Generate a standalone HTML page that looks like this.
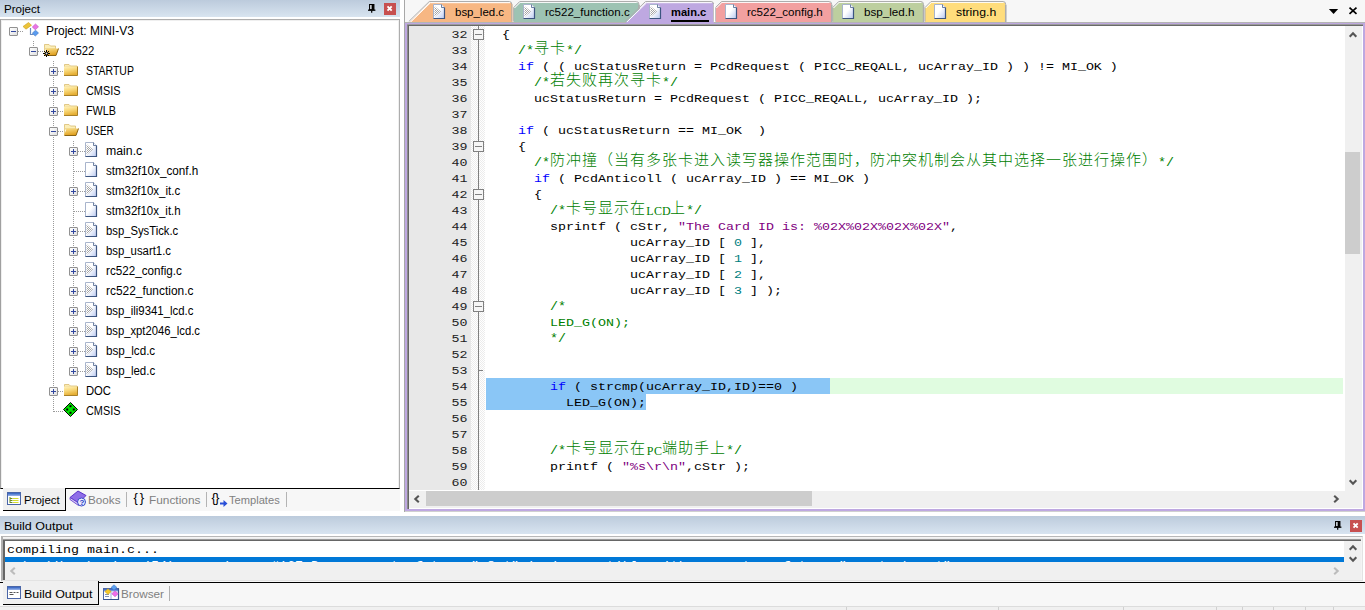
<!DOCTYPE html><html><head><meta charset="utf-8"><title>uVision</title><style>
*{box-sizing:border-box;margin:0;padding:0}
html,body{width:1365px;height:610px;overflow:hidden;background:#fff}
body{position:relative;font-family:"Liberation Sans","Noto Sans CJK SC",sans-serif;font-size:12px;color:#000}
.abs{position:absolute}
.ttl{position:absolute;height:17px;background:linear-gradient(#bccbdc,#d8e4f0);font-size:11.2px;line-height:18.5px;padding-left:3.8px;white-space:nowrap}
.closeb{position:absolute;width:12px;height:12px;background:#c75050}
.tree{position:absolute;left:0;top:19px;width:400px;height:470px;background:#fff;border:1px solid #adadad;border-left-color:#a0a0a0;border-bottom:1px solid #000;box-shadow:inset 1px 1px 0 #efefef,inset -1px 0 0 #efefef}
.trow{position:absolute;height:20px;line-height:20px;font-size:12px;white-space:nowrap}
.pm{position:absolute;width:9px;height:9px;border:1px solid #919191;background:linear-gradient(135deg,#fff,#e0e0e0);border-radius:1px}
.pm:before{content:"";position:absolute;left:1px;top:3px;width:5px;height:1px;background:#31479f}
.pm.plus:after{content:"";position:absolute;left:3px;top:1px;width:1px;height:5px;background:#31479f}
.btab{position:absolute;font-size:11.5px;line-height:20px;white-space:nowrap;color:#808080}
.btab.sel{color:#000}
.code,.cm{position:absolute;height:16px;line-height:16px;font-family:"Liberation Mono",monospace;font-size:13.333px;white-space:pre;color:#000;transform-origin:0 11.600px;transform:scaleY(.85)}
.cm{transform:none}
.code.ns{transform:scaleY(.95)}
.ln{position:absolute;left:409px;width:58.500px;text-align:right;height:16px;line-height:16px;font-family:"Liberation Mono",monospace;font-size:13.333px;color:#222;transform-origin:0 11.600px;transform:scaleY(.85)}
.code.k{color:#0000ff}.c,.code.c{color:#008000}.code.s{color:#800080}.code.n{color:#008080}
.cz{position:absolute;height:16px;line-height:16px;font-family:"Liberation Mono","Noto Sans CJK SC",monospace;font-size:15px;font-weight:300;letter-spacing:1px;white-space:pre;margin-top:-1.2px}
.sm{font-family:"Liberation Serif",serif;font-size:12px;display:inline-block;width:8px;text-align:center;vertical-align:baseline}
.fold{position:absolute;left:473px;width:11px;height:11px;border:1px solid #808080;background:#f6f6f6}
.fold:before{content:"";position:absolute;left:1px;top:4px;width:7px;height:1px;background:#808080}
.etab{position:absolute;top:2.1px;height:21px;font-size:11.3px;line-height:20px;white-space:nowrap}
</style></head><body>
<svg width="0" height="0" style="position:absolute"><defs><linearGradient id="tb" x1="0" y1="0" x2="0" y2="1"><stop offset="0" stop-color="#2f5fc0"/><stop offset="1" stop-color="#9db8ec"/></linearGradient></defs></svg>
<div class="ttl" style="left:0;top:0;width:400px"><span style="display:inline-block;transform-origin:0 50%;transform:scaleX(1.0365);">Project</span></div>
<div class="abs" style="left:368px;top:3.900px"><svg width="8" height="9" viewBox="0 0 8 9" style="display:block"><rect x="1.600" y="0.500" width="4.300" height="5.200" fill="#e8eef4" stroke="#000" stroke-width="1.100"/><rect x="3.600" y="0.500" width="2.300" height="5.200" fill="#000"/><path d="M0 6.200h7.400" stroke="#000" stroke-width="1.300"/><path d="M3.700 6.500v2.300" stroke="#000" stroke-width="1.200"/></svg></div>
<div class="closeb" style="left:384px;top:3px"><svg width="12" height="12" viewBox="0 0 12 12" style="display:block"><path d="M3.500 3.400L7.700 7.600M7.700 3.400L3.500 7.600" stroke="#fff" stroke-width="1.900"/></svg></div>
<div class="tree"></div>
<div class="abs" style="left:33px;top:41px;width:1px;height:6px;background-image:linear-gradient(#9a9a9a 50%,transparent 50%);background-size:1px 2px"></div>
<div class="abs" style="left:53px;top:61px;width:1px;height:351px;background-image:linear-gradient(#9a9a9a 50%,transparent 50%);background-size:1px 2px"></div>
<div class="abs" style="left:73px;top:141px;width:1px;height:231px;background-image:linear-gradient(#9a9a9a 50%,transparent 50%);background-size:1px 2px"></div>
<div class="abs" style="left:14px;top:31px;width:10px;height:1px;background-image:linear-gradient(90deg,#9a9a9a 50%,transparent 50%);background-size:2px 1px"></div>
<div class="pm" style="left:9px;top:27px"></div>
<div class="abs" style="left:22px;top:22px;height:16px"><svg width="18" height="16" viewBox="0 0 18 16"><path d="M8.500 6v6.500h3" fill="none" stroke="#6b8cc0" stroke-width="1.200"/><path d="M1 4.500l5.500-4 3 2.700-5.500 4z" fill="#ecc338" stroke="#c9a020" stroke-width=".6"/><path d="M13.500 2l3 2.800-3.200 3-3-2.800z" fill="#ea74e6" stroke="#c050bc" stroke-width=".6"/><path d="M13.500 8.200l3 2.800-3.200 3-3-2.800z" fill="#5a9cf0" stroke="#3a70c0" stroke-width=".6"/></svg></div>
<div class="trow" style="left:45.8px;top:20.9px;transform-origin:0 50%;transform:scaleX(0.9974);">Project: MINI-V3</div>
<div class="abs" style="left:34px;top:51px;width:10px;height:1px;background-image:linear-gradient(90deg,#9a9a9a 50%,transparent 50%);background-size:2px 1px"></div>
<div class="pm" style="left:29px;top:47px"></div>
<div class="abs" style="left:43px;top:42px;height:16px"><svg width="16" height="16" viewBox="0 0 16 16"><path d="M1.500 2.500h4.500l1.500 1.500h5v3h-11z" fill="#fbeeb8" stroke="#d9bd72" stroke-width=".8"/><path d="M1.500 5v8" stroke="#e8d08a" stroke-width="1"/><path d="M1 13.500l2.500-7h12l-2.500 7z" fill="url(#fo)"/><path d="M1.500 13.500h11.500l2.500-7" fill="none" stroke="#8a6414" stroke-width="1"/></svg></div>
<div class="trow" style="left:66.3px;top:40.9px;transform-origin:0 50%;transform:scaleX(0.9424);">rc522</div>
<div class="abs" style="left:54px;top:71px;width:10px;height:1px;background-image:linear-gradient(90deg,#9a9a9a 50%,transparent 50%);background-size:2px 1px"></div>
<div class="pm plus" style="left:49px;top:67px"></div>
<div class="abs" style="left:63px;top:62px;height:16px"><svg width="16" height="16" viewBox="0 0 16 16"><defs><linearGradient id="fg" x1="0" y1="0" x2="0.300" y2="1"><stop offset="0" stop-color="#fff3c0"/><stop offset=".45" stop-color="#f9da7e"/><stop offset="1" stop-color="#e5ae34"/></linearGradient><linearGradient id="fo" x1="0" y1="0" x2="0.300" y2="1"><stop offset="0" stop-color="#fbe08a"/><stop offset="1" stop-color="#e0a020"/></linearGradient></defs><path d="M1.500 2.500h4.500l1.500 1.500h6.500v1h-12.500z" fill="#fbeab0" stroke="#d9bd72" stroke-width=".8"/><path d="M1 4.500h13.500v9h-13.500z" fill="url(#fg)"/><path d="M1 13.500h13.500v-9" fill="none" stroke="#a88028" stroke-width="1"/></svg></div>
<div class="trow" style="left:86.1px;top:60.9px;transform-origin:0 50%;transform:scaleX(0.8724);">STARTUP</div>
<div class="abs" style="left:54px;top:91px;width:10px;height:1px;background-image:linear-gradient(90deg,#9a9a9a 50%,transparent 50%);background-size:2px 1px"></div>
<div class="pm plus" style="left:49px;top:87px"></div>
<div class="abs" style="left:63px;top:82px;height:16px"><svg width="16" height="16" viewBox="0 0 16 16"><defs><linearGradient id="fg" x1="0" y1="0" x2="0.300" y2="1"><stop offset="0" stop-color="#fff3c0"/><stop offset=".45" stop-color="#f9da7e"/><stop offset="1" stop-color="#e5ae34"/></linearGradient><linearGradient id="fo" x1="0" y1="0" x2="0.300" y2="1"><stop offset="0" stop-color="#fbe08a"/><stop offset="1" stop-color="#e0a020"/></linearGradient></defs><path d="M1.500 2.500h4.500l1.500 1.500h6.500v1h-12.500z" fill="#fbeab0" stroke="#d9bd72" stroke-width=".8"/><path d="M1 4.500h13.500v9h-13.500z" fill="url(#fg)"/><path d="M1 13.500h13.500v-9" fill="none" stroke="#a88028" stroke-width="1"/></svg></div>
<div class="trow" style="left:86.1px;top:80.9px;transform-origin:0 50%;transform:scaleX(0.9075);">CMSIS</div>
<div class="abs" style="left:54px;top:111px;width:10px;height:1px;background-image:linear-gradient(90deg,#9a9a9a 50%,transparent 50%);background-size:2px 1px"></div>
<div class="pm plus" style="left:49px;top:107px"></div>
<div class="abs" style="left:63px;top:102px;height:16px"><svg width="16" height="16" viewBox="0 0 16 16"><defs><linearGradient id="fg" x1="0" y1="0" x2="0.300" y2="1"><stop offset="0" stop-color="#fff3c0"/><stop offset=".45" stop-color="#f9da7e"/><stop offset="1" stop-color="#e5ae34"/></linearGradient><linearGradient id="fo" x1="0" y1="0" x2="0.300" y2="1"><stop offset="0" stop-color="#fbe08a"/><stop offset="1" stop-color="#e0a020"/></linearGradient></defs><path d="M1.500 2.500h4.500l1.500 1.500h6.500v1h-12.500z" fill="#fbeab0" stroke="#d9bd72" stroke-width=".8"/><path d="M1 4.500h13.500v9h-13.500z" fill="url(#fg)"/><path d="M1 13.500h13.500v-9" fill="none" stroke="#a88028" stroke-width="1"/></svg></div>
<div class="trow" style="left:86.1px;top:100.9px;transform-origin:0 50%;transform:scaleX(0.8997);">FWLB</div>
<div class="abs" style="left:54px;top:131px;width:10px;height:1px;background-image:linear-gradient(90deg,#9a9a9a 50%,transparent 50%);background-size:2px 1px"></div>
<div class="pm" style="left:49px;top:127px"></div>
<div class="abs" style="left:63px;top:122px;height:16px"><svg width="16" height="16" viewBox="0 0 16 16"><path d="M1.500 2.500h4.500l1.500 1.500h5v3h-11z" fill="#fbeeb8" stroke="#d9bd72" stroke-width=".8"/><path d="M1.500 5v8" stroke="#e8d08a" stroke-width="1"/><path d="M1 13.500l2.500-7h12l-2.500 7z" fill="url(#fo)"/><path d="M1.500 13.500h11.500l2.500-7" fill="none" stroke="#8a6414" stroke-width="1"/></svg></div>
<div class="trow" style="left:86.1px;top:120.9px;transform-origin:0 50%;transform:scaleX(0.8307);">USER</div>
<div class="abs" style="left:74px;top:151px;width:12px;height:1px;background-image:linear-gradient(90deg,#9a9a9a 50%,transparent 50%);background-size:2px 1px"></div>
<div class="pm plus" style="left:69px;top:147px"></div>
<div class="abs" style="left:85px;top:142px;height:16px"><svg width="13" height="16" viewBox="0 0 13 16"><defs><pattern id="dp" width="2" height="2" patternUnits="userSpaceOnUse"><rect width="1" height="1" fill="#a4a4a4"/><rect x="1" y="1" width="1" height="1" fill="#a4a4a4"/></pattern><linearGradient id="pg" x1="0" y1="0" x2="1" y2="1"><stop offset=".45" stop-color="#fff"/><stop offset="1" stop-color="#b8c8f0"/></linearGradient></defs><path d="M0.500 0.500h8l3 3v11h-11z" fill="url(#pg)" stroke="#a8b4cc"/><path d="M11.500 3.500v11h-11" fill="none" stroke="#3c5580" stroke-width="1.200"/><path d="M8.500 0.500v3h3" fill="#f4f6fd" stroke="#4a628c" stroke-width=".8"/><polygon points="1.500,2 1.500,13 8,7.500" fill="url(#dp)"/></svg></div>
<div class="trow" style="left:106.1px;top:140.9px;transform-origin:0 50%;transform:scaleX(1.0242);">main.c</div>
<div class="abs" style="left:74px;top:171px;width:12px;height:1px;background-image:linear-gradient(90deg,#9a9a9a 50%,transparent 50%);background-size:2px 1px"></div>
<div class="abs" style="left:85px;top:162px;height:16px"><svg width="13" height="16" viewBox="0 0 13 16"><path d="M0.500 0.500h8l3 3v11h-11z" fill="url(#pg)" stroke="#a8b4cc"/><path d="M11.500 3.500v11h-11" fill="none" stroke="#3c5580" stroke-width="1.200"/><path d="M8.500 0.500v3h3" fill="#f4f6fd" stroke="#4a628c" stroke-width=".8"/></svg></div>
<div class="trow" style="left:106.1px;top:160.9px;transform-origin:0 50%;transform:scaleX(0.9743);">stm32f10x_conf.h</div>
<div class="abs" style="left:74px;top:191px;width:12px;height:1px;background-image:linear-gradient(90deg,#9a9a9a 50%,transparent 50%);background-size:2px 1px"></div>
<div class="pm plus" style="left:69px;top:187px"></div>
<div class="abs" style="left:85px;top:182px;height:16px"><svg width="13" height="16" viewBox="0 0 13 16"><defs><pattern id="dp" width="2" height="2" patternUnits="userSpaceOnUse"><rect width="1" height="1" fill="#a4a4a4"/><rect x="1" y="1" width="1" height="1" fill="#a4a4a4"/></pattern><linearGradient id="pg" x1="0" y1="0" x2="1" y2="1"><stop offset=".45" stop-color="#fff"/><stop offset="1" stop-color="#b8c8f0"/></linearGradient></defs><path d="M0.500 0.500h8l3 3v11h-11z" fill="url(#pg)" stroke="#a8b4cc"/><path d="M11.500 3.500v11h-11" fill="none" stroke="#3c5580" stroke-width="1.200"/><path d="M8.500 0.500v3h3" fill="#f4f6fd" stroke="#4a628c" stroke-width=".8"/><polygon points="1.500,2 1.500,13 8,7.500" fill="url(#dp)"/></svg></div>
<div class="trow" style="left:106.1px;top:180.9px;transform-origin:0 50%;transform:scaleX(0.959);">stm32f10x_it.c</div>
<div class="abs" style="left:74px;top:211px;width:12px;height:1px;background-image:linear-gradient(90deg,#9a9a9a 50%,transparent 50%);background-size:2px 1px"></div>
<div class="abs" style="left:85px;top:202px;height:16px"><svg width="13" height="16" viewBox="0 0 13 16"><path d="M0.500 0.500h8l3 3v11h-11z" fill="url(#pg)" stroke="#a8b4cc"/><path d="M11.500 3.500v11h-11" fill="none" stroke="#3c5580" stroke-width="1.200"/><path d="M8.500 0.500v3h3" fill="#f4f6fd" stroke="#4a628c" stroke-width=".8"/></svg></div>
<div class="trow" style="left:106.1px;top:200.9px;transform-origin:0 50%;transform:scaleX(0.9571);">stm32f10x_it.h</div>
<div class="abs" style="left:74px;top:231px;width:12px;height:1px;background-image:linear-gradient(90deg,#9a9a9a 50%,transparent 50%);background-size:2px 1px"></div>
<div class="pm plus" style="left:69px;top:227px"></div>
<div class="abs" style="left:85px;top:222px;height:16px"><svg width="13" height="16" viewBox="0 0 13 16"><defs><pattern id="dp" width="2" height="2" patternUnits="userSpaceOnUse"><rect width="1" height="1" fill="#a4a4a4"/><rect x="1" y="1" width="1" height="1" fill="#a4a4a4"/></pattern><linearGradient id="pg" x1="0" y1="0" x2="1" y2="1"><stop offset=".45" stop-color="#fff"/><stop offset="1" stop-color="#b8c8f0"/></linearGradient></defs><path d="M0.500 0.500h8l3 3v11h-11z" fill="url(#pg)" stroke="#a8b4cc"/><path d="M11.500 3.500v11h-11" fill="none" stroke="#3c5580" stroke-width="1.200"/><path d="M8.500 0.500v3h3" fill="#f4f6fd" stroke="#4a628c" stroke-width=".8"/><polygon points="1.500,2 1.500,13 8,7.500" fill="url(#dp)"/></svg></div>
<div class="trow" style="left:106.1px;top:220.9px;transform-origin:0 50%;transform:scaleX(0.9386);">bsp_SysTick.c</div>
<div class="abs" style="left:74px;top:251px;width:12px;height:1px;background-image:linear-gradient(90deg,#9a9a9a 50%,transparent 50%);background-size:2px 1px"></div>
<div class="pm plus" style="left:69px;top:247px"></div>
<div class="abs" style="left:85px;top:242px;height:16px"><svg width="13" height="16" viewBox="0 0 13 16"><defs><pattern id="dp" width="2" height="2" patternUnits="userSpaceOnUse"><rect width="1" height="1" fill="#a4a4a4"/><rect x="1" y="1" width="1" height="1" fill="#a4a4a4"/></pattern><linearGradient id="pg" x1="0" y1="0" x2="1" y2="1"><stop offset=".45" stop-color="#fff"/><stop offset="1" stop-color="#b8c8f0"/></linearGradient></defs><path d="M0.500 0.500h8l3 3v11h-11z" fill="url(#pg)" stroke="#a8b4cc"/><path d="M11.500 3.500v11h-11" fill="none" stroke="#3c5580" stroke-width="1.200"/><path d="M8.500 0.500v3h3" fill="#f4f6fd" stroke="#4a628c" stroke-width=".8"/><polygon points="1.500,2 1.500,13 8,7.500" fill="url(#dp)"/></svg></div>
<div class="trow" style="left:106.1px;top:240.9px;transform-origin:0 50%;transform:scaleX(0.9459);">bsp_usart1.c</div>
<div class="abs" style="left:74px;top:271px;width:12px;height:1px;background-image:linear-gradient(90deg,#9a9a9a 50%,transparent 50%);background-size:2px 1px"></div>
<div class="pm plus" style="left:69px;top:267px"></div>
<div class="abs" style="left:85px;top:262px;height:16px"><svg width="13" height="16" viewBox="0 0 13 16"><defs><pattern id="dp" width="2" height="2" patternUnits="userSpaceOnUse"><rect width="1" height="1" fill="#a4a4a4"/><rect x="1" y="1" width="1" height="1" fill="#a4a4a4"/></pattern><linearGradient id="pg" x1="0" y1="0" x2="1" y2="1"><stop offset=".45" stop-color="#fff"/><stop offset="1" stop-color="#b8c8f0"/></linearGradient></defs><path d="M0.500 0.500h8l3 3v11h-11z" fill="url(#pg)" stroke="#a8b4cc"/><path d="M11.500 3.500v11h-11" fill="none" stroke="#3c5580" stroke-width="1.200"/><path d="M8.500 0.500v3h3" fill="#f4f6fd" stroke="#4a628c" stroke-width=".8"/><polygon points="1.500,2 1.500,13 8,7.500" fill="url(#dp)"/></svg></div>
<div class="trow" style="left:106.1px;top:260.9px;transform-origin:0 50%;transform:scaleX(0.9712);">rc522_config.c</div>
<div class="abs" style="left:74px;top:291px;width:12px;height:1px;background-image:linear-gradient(90deg,#9a9a9a 50%,transparent 50%);background-size:2px 1px"></div>
<div class="pm plus" style="left:69px;top:287px"></div>
<div class="abs" style="left:85px;top:282px;height:16px"><svg width="13" height="16" viewBox="0 0 13 16"><defs><pattern id="dp" width="2" height="2" patternUnits="userSpaceOnUse"><rect width="1" height="1" fill="#a4a4a4"/><rect x="1" y="1" width="1" height="1" fill="#a4a4a4"/></pattern><linearGradient id="pg" x1="0" y1="0" x2="1" y2="1"><stop offset=".45" stop-color="#fff"/><stop offset="1" stop-color="#b8c8f0"/></linearGradient></defs><path d="M0.500 0.500h8l3 3v11h-11z" fill="url(#pg)" stroke="#a8b4cc"/><path d="M11.500 3.500v11h-11" fill="none" stroke="#3c5580" stroke-width="1.200"/><path d="M8.500 0.500v3h3" fill="#f4f6fd" stroke="#4a628c" stroke-width=".8"/><polygon points="1.500,2 1.500,13 8,7.500" fill="url(#dp)"/></svg></div>
<div class="trow" style="left:106.1px;top:280.9px;transform-origin:0 50%;transform:scaleX(0.9925);">rc522_function.c</div>
<div class="abs" style="left:74px;top:311px;width:12px;height:1px;background-image:linear-gradient(90deg,#9a9a9a 50%,transparent 50%);background-size:2px 1px"></div>
<div class="pm plus" style="left:69px;top:307px"></div>
<div class="abs" style="left:85px;top:302px;height:16px"><svg width="13" height="16" viewBox="0 0 13 16"><defs><pattern id="dp" width="2" height="2" patternUnits="userSpaceOnUse"><rect width="1" height="1" fill="#a4a4a4"/><rect x="1" y="1" width="1" height="1" fill="#a4a4a4"/></pattern><linearGradient id="pg" x1="0" y1="0" x2="1" y2="1"><stop offset=".45" stop-color="#fff"/><stop offset="1" stop-color="#b8c8f0"/></linearGradient></defs><path d="M0.500 0.500h8l3 3v11h-11z" fill="url(#pg)" stroke="#a8b4cc"/><path d="M11.500 3.500v11h-11" fill="none" stroke="#3c5580" stroke-width="1.200"/><path d="M8.500 0.500v3h3" fill="#f4f6fd" stroke="#4a628c" stroke-width=".8"/><polygon points="1.500,2 1.500,13 8,7.500" fill="url(#dp)"/></svg></div>
<div class="trow" style="left:106.1px;top:300.9px;transform-origin:0 50%;transform:scaleX(0.9494);">bsp_ili9341_lcd.c</div>
<div class="abs" style="left:74px;top:331px;width:12px;height:1px;background-image:linear-gradient(90deg,#9a9a9a 50%,transparent 50%);background-size:2px 1px"></div>
<div class="pm plus" style="left:69px;top:327px"></div>
<div class="abs" style="left:85px;top:322px;height:16px"><svg width="13" height="16" viewBox="0 0 13 16"><defs><pattern id="dp" width="2" height="2" patternUnits="userSpaceOnUse"><rect width="1" height="1" fill="#a4a4a4"/><rect x="1" y="1" width="1" height="1" fill="#a4a4a4"/></pattern><linearGradient id="pg" x1="0" y1="0" x2="1" y2="1"><stop offset=".45" stop-color="#fff"/><stop offset="1" stop-color="#b8c8f0"/></linearGradient></defs><path d="M0.500 0.500h8l3 3v11h-11z" fill="url(#pg)" stroke="#a8b4cc"/><path d="M11.500 3.500v11h-11" fill="none" stroke="#3c5580" stroke-width="1.200"/><path d="M8.500 0.500v3h3" fill="#f4f6fd" stroke="#4a628c" stroke-width=".8"/><polygon points="1.500,2 1.500,13 8,7.500" fill="url(#dp)"/></svg></div>
<div class="trow" style="left:106.1px;top:320.9px;transform-origin:0 50%;transform:scaleX(0.9383);">bsp_xpt2046_lcd.c</div>
<div class="abs" style="left:74px;top:351px;width:12px;height:1px;background-image:linear-gradient(90deg,#9a9a9a 50%,transparent 50%);background-size:2px 1px"></div>
<div class="pm plus" style="left:69px;top:347px"></div>
<div class="abs" style="left:85px;top:342px;height:16px"><svg width="13" height="16" viewBox="0 0 13 16"><defs><pattern id="dp" width="2" height="2" patternUnits="userSpaceOnUse"><rect width="1" height="1" fill="#a4a4a4"/><rect x="1" y="1" width="1" height="1" fill="#a4a4a4"/></pattern><linearGradient id="pg" x1="0" y1="0" x2="1" y2="1"><stop offset=".45" stop-color="#fff"/><stop offset="1" stop-color="#b8c8f0"/></linearGradient></defs><path d="M0.500 0.500h8l3 3v11h-11z" fill="url(#pg)" stroke="#a8b4cc"/><path d="M11.500 3.500v11h-11" fill="none" stroke="#3c5580" stroke-width="1.200"/><path d="M8.500 0.500v3h3" fill="#f4f6fd" stroke="#4a628c" stroke-width=".8"/><polygon points="1.500,2 1.500,13 8,7.500" fill="url(#dp)"/></svg></div>
<div class="trow" style="left:106.1px;top:340.9px;transform-origin:0 50%;transform:scaleX(0.9704);">bsp_lcd.c</div>
<div class="abs" style="left:74px;top:371px;width:12px;height:1px;background-image:linear-gradient(90deg,#9a9a9a 50%,transparent 50%);background-size:2px 1px"></div>
<div class="pm plus" style="left:69px;top:367px"></div>
<div class="abs" style="left:85px;top:362px;height:16px"><svg width="13" height="16" viewBox="0 0 13 16"><defs><pattern id="dp" width="2" height="2" patternUnits="userSpaceOnUse"><rect width="1" height="1" fill="#a4a4a4"/><rect x="1" y="1" width="1" height="1" fill="#a4a4a4"/></pattern><linearGradient id="pg" x1="0" y1="0" x2="1" y2="1"><stop offset=".45" stop-color="#fff"/><stop offset="1" stop-color="#b8c8f0"/></linearGradient></defs><path d="M0.500 0.500h8l3 3v11h-11z" fill="url(#pg)" stroke="#a8b4cc"/><path d="M11.500 3.500v11h-11" fill="none" stroke="#3c5580" stroke-width="1.200"/><path d="M8.500 0.500v3h3" fill="#f4f6fd" stroke="#4a628c" stroke-width=".8"/><polygon points="1.500,2 1.500,13 8,7.500" fill="url(#dp)"/></svg></div>
<div class="trow" style="left:106.1px;top:360.9px;transform-origin:0 50%;transform:scaleX(0.9577);">bsp_led.c</div>
<div class="abs" style="left:54px;top:391px;width:10px;height:1px;background-image:linear-gradient(90deg,#9a9a9a 50%,transparent 50%);background-size:2px 1px"></div>
<div class="pm plus" style="left:49px;top:387px"></div>
<div class="abs" style="left:63px;top:382px;height:16px"><svg width="16" height="16" viewBox="0 0 16 16"><defs><linearGradient id="fg" x1="0" y1="0" x2="0.300" y2="1"><stop offset="0" stop-color="#fff3c0"/><stop offset=".45" stop-color="#f9da7e"/><stop offset="1" stop-color="#e5ae34"/></linearGradient><linearGradient id="fo" x1="0" y1="0" x2="0.300" y2="1"><stop offset="0" stop-color="#fbe08a"/><stop offset="1" stop-color="#e0a020"/></linearGradient></defs><path d="M1.500 2.500h4.500l1.500 1.500h6.500v1h-12.500z" fill="#fbeab0" stroke="#d9bd72" stroke-width=".8"/><path d="M1 4.500h13.500v9h-13.500z" fill="url(#fg)"/><path d="M1 13.500h13.500v-9" fill="none" stroke="#a88028" stroke-width="1"/></svg></div>
<div class="trow" style="left:86.3px;top:380.9px;transform-origin:0 50%;transform:scaleX(0.9373);">DOC</div>
<div class="abs" style="left:54px;top:411px;width:10px;height:1px;background-image:linear-gradient(90deg,#9a9a9a 50%,transparent 50%);background-size:2px 1px"></div>
<div class="abs" style="left:63px;top:402px;height:16px"><svg width="16" height="16" viewBox="0 0 16 16"><path d="M7.500 0.500l7 7-7 7-7-7z" fill="#00e000" stroke="#000" stroke-width="1"/><g fill="#000"><rect x="6.500" y="3.200" width="2" height="2"/><rect x="3.200" y="6.500" width="2" height="2"/><rect x="9.800" y="6.500" width="2" height="2"/><rect x="6.500" y="9.800" width="2" height="2"/></g></svg></div>
<div class="trow" style="left:86.1px;top:400.9px;transform-origin:0 50%;transform:scaleX(0.9075);">CMSIS</div>
<svg class="abs" style="left:43px;top:50px" width="7" height="7" viewBox="0 0 7 7"><path d="M3.500 0v7M0 3.500h7M1 1l5 5M6 1l-5 5" stroke="#000" stroke-width="1"/><circle cx="3.500" cy="3.500" r="1" fill="#ddd"/></svg>
<div class="abs" style="left:0;top:489px;width:400px;height:27px;background:#fff"></div>
<div class="abs" style="left:3px;top:489px;width:397px;height:22px;background:#f7f7f7"></div>
<div class="abs" style="left:3px;top:488px;width:63px;height:23px;background:#f0f0f0;border:1px solid #000;border-top:none;border-left:none"></div>
<svg class="abs" style="left:7px;top:492px" width="14" height="13" viewBox="0 0 14 13"><rect x=".5" y=".5" width="13" height="12" fill="#fff" stroke="#4a66a8"/><rect x="1" y="1" width="12" height="3" fill="url(#tb)"/><path d="M3 5v6" stroke="#6a8a20" stroke-width="1"/><path d="M3 6.500h2.500M3 8.500h2.500M3 10.500h2.500" stroke="#6a8a20" stroke-width="1"/><path d="M6 6.500h5.500M6 8.500h5.500M6 10.500h5.500" stroke="#d4dc30" stroke-width="1.200"/></svg>
<div class="btab sel" style="left:24px;top:490px;transform-origin:0 50%;transform:scaleX(0.9973);">Project</div>
<svg class="abs" style="left:69px;top:490px" width="18" height="17" viewBox="0 0 18 17"><path d="M1 7.500l8-6.500 8 4.500-7.500 7.500z" fill="#8f6ee8" stroke="#5a32c8"/><path d="M1 7.500v2l8.500 6v-2.500z" fill="#d8ccf8" stroke="#5a32c8" stroke-width=".8"/><circle cx="12.500" cy="12" r="4" fill="#e8ecff" stroke="#3a4ac8"/><text x="10.500" y="15" font-size="8" font-weight="bold" fill="#2a3ac0" font-family="Liberation Sans,sans-serif">?</text></svg>
<div class="btab" style="left:88px;top:490px;transform-origin:0 50%;transform:scaleX(1.0166);">Books</div>
<div class="abs" style="left:126px;top:492px;width:1px;height:15px;background:#b4b4b4"></div>
<div class="btab sel" style="left:133.500px;top:487.500px;font-size:13px;letter-spacing:1.800px">{}</div>
<div class="btab" style="left:149px;top:490px;transform-origin:0 50%;transform:scaleX(1.0309);">Functions</div>
<div class="abs" style="left:206px;top:492px;width:1px;height:15px;background:#b4b4b4"></div>
<div class="btab sel" style="left:211.500px;top:487.500px;font-size:13px;letter-spacing:-0.800px">{}</div>
<svg class="abs" style="left:219.500px;top:500px" width="8" height="7" viewBox="0 0 8 7"><path d="M0 2.500h3.500v-2.500l4 3.500-4 3.500v-2.500h-3.500z" fill="#2a50d8"/></svg>
<div class="btab" style="left:228.500px;top:490px;transform-origin:0 50%;transform:scaleX(0.9672);">Templates</div>
<div class="abs" style="left:286px;top:492px;width:1px;height:15px;background:#b4b4b4"></div>
<div class="abs" style="left:400px;top:0;width:4px;height:516px;background:#fff"></div>
<div class="abs" style="left:404px;top:0;width:1px;height:512px;background:#a8a8a8"></div>
<div class="abs" style="left:405px;top:0;width:960px;height:23px;background:#f7f7f7"></div>
<svg class="abs" style="left:405px;top:0" width="960" height="23" viewBox="405 0 960 23">
<path d="M409.5 22.5 L430.0 2.5 H510 Q512.5 2.5 512.5 5.5 V22.5 Z" fill="#f7b783"/><path d="M409.5 22.5 L430.0 2.5 H510 Q512.5 2.5 512.5 5.5 V22.5" fill="none" stroke="#adadad" stroke-width="1" transform="translate(-0.7,-1)"/><path d="M410.2 22.5 L430.5 2.7 H510" fill="none" stroke="#fff" stroke-width="1"/>
<path d="M513.7 22.5 V8.5 L519.7 2.5 H636.5 Q639.0 2.5 639.0 5.5 V22.5 Z" fill="#9dc3b3"/><path d="M513.7 22.5 V8.5 L519.7 2.5 H636.5 Q639.0 2.5 639.0 5.5 V22.5" fill="none" stroke="#adadad" stroke-width="1" transform="translate(0,-1)"/><path d="M514.7 9 L520.2 3.5 H636.5" fill="none" stroke="#fff" stroke-opacity=".8" stroke-width="1" transform="translate(0,-1)"/><path d="M639.0 5 V22.5" stroke="#adadad" stroke-width="1.500"/>
<path d="M715.5 22.5 V8.5 L721.5 2.5 H829.2 Q831.7 2.5 831.7 5.5 V22.5 Z" fill="#f2a0a0"/><path d="M715.5 22.5 V8.5 L721.5 2.5 H829.2 Q831.7 2.5 831.7 5.5 V22.5" fill="none" stroke="#adadad" stroke-width="1" transform="translate(0,-1)"/><path d="M716.5 9 L722.0 3.5 H829.2" fill="none" stroke="#fff" stroke-opacity=".8" stroke-width="1" transform="translate(0,-1)"/><path d="M831.7 5 V22.5" stroke="#adadad" stroke-width="1.500"/>
<path d="M832.7 22.5 V8.5 L838.7 2.5 H921 Q923.5 2.5 923.5 5.5 V22.5 Z" fill="#bdcf9f"/><path d="M832.7 22.5 V8.5 L838.7 2.5 H921 Q923.5 2.5 923.5 5.5 V22.5" fill="none" stroke="#adadad" stroke-width="1" transform="translate(0,-1)"/><path d="M833.7 9 L839.2 3.5 H921" fill="none" stroke="#fff" stroke-opacity=".8" stroke-width="1" transform="translate(0,-1)"/><path d="M923.5 5 V22.5" stroke="#adadad" stroke-width="1.500"/>
<path d="M925 22.5 V8.5 L931 2.5 H1003.2 Q1005.7 2.5 1005.7 5.5 V22.5 Z" fill="#ffdd7c"/><path d="M925 22.5 V8.5 L931 2.5 H1003.2 Q1005.7 2.5 1005.7 5.5 V22.5" fill="none" stroke="#adadad" stroke-width="1" transform="translate(0,-1)"/><path d="M926 9 L931.5 3.5 H1003.2" fill="none" stroke="#fff" stroke-opacity=".8" stroke-width="1" transform="translate(0,-1)"/><path d="M1005.7 5 V22.5" stroke="#adadad" stroke-width="1.500"/>
<path d="M625.7 22.5 L646.2 2.5 H711.8 Q714.3 2.5 714.3 5.5 V22.5 Z" fill="#bea8e1"/><path d="M625.7 22.5 L646.2 2.5 H711.8 Q714.3 2.5 714.3 5.5 V22.5" fill="none" stroke="#adadad" stroke-width="1" transform="translate(-0.7,-1)"/><path d="M626.4000000000001 22.5 L646.7 2.7 H711.8" fill="none" stroke="#fff" stroke-width="1"/>
<path d="M714.500 4 V22.500" stroke="#fff" stroke-width="1.500"/>
<path d="M405 22.500 H1365" stroke="#b4b4b4" stroke-width="1"/>
<path d="M626 22.500 H714" stroke="#bea8e1" stroke-width="1"/>
</svg>
<div class="abs" style="left:433px;top:4px;height:16px"><svg width="13" height="16" viewBox="0 0 13 16"><defs><pattern id="dp" width="2" height="2" patternUnits="userSpaceOnUse"><rect width="1" height="1" fill="#a4a4a4"/><rect x="1" y="1" width="1" height="1" fill="#a4a4a4"/></pattern><linearGradient id="pg" x1="0" y1="0" x2="1" y2="1"><stop offset=".45" stop-color="#fff"/><stop offset="1" stop-color="#b8c8f0"/></linearGradient></defs><path d="M0.500 0.500h8l3 3v11h-11z" fill="url(#pg)" stroke="#a8b4cc"/><path d="M11.500 3.500v11h-11" fill="none" stroke="#3c5580" stroke-width="1.200"/><path d="M8.500 0.500v3h3" fill="#f4f6fd" stroke="#4a628c" stroke-width=".8"/><polygon points="1.500,2 1.500,13 8,7.500" fill="url(#dp)"/></svg></div>
<div class="etab" style="left:454.8px;transform-origin:0 50%;transform:scaleX(1.0153);">bsp_led.c</div>
<div class="abs" style="left:523.4px;top:4px;height:16px"><svg width="13" height="16" viewBox="0 0 13 16"><defs><pattern id="dp" width="2" height="2" patternUnits="userSpaceOnUse"><rect width="1" height="1" fill="#a4a4a4"/><rect x="1" y="1" width="1" height="1" fill="#a4a4a4"/></pattern><linearGradient id="pg" x1="0" y1="0" x2="1" y2="1"><stop offset=".45" stop-color="#fff"/><stop offset="1" stop-color="#b8c8f0"/></linearGradient></defs><path d="M0.500 0.500h8l3 3v11h-11z" fill="url(#pg)" stroke="#a8b4cc"/><path d="M11.500 3.500v11h-11" fill="none" stroke="#3c5580" stroke-width="1.200"/><path d="M8.500 0.500v3h3" fill="#f4f6fd" stroke="#4a628c" stroke-width=".8"/><polygon points="1.500,2 1.500,13 8,7.500" fill="url(#dp)"/></svg></div>
<div class="etab" style="left:544.6px;transform-origin:0 50%;transform:scaleX(1.0216);">rc522_function.c</div>
<div class="abs" style="left:649.4px;top:4px;height:16px"><svg width="13" height="16" viewBox="0 0 13 16"><defs><pattern id="dp" width="2" height="2" patternUnits="userSpaceOnUse"><rect width="1" height="1" fill="#a4a4a4"/><rect x="1" y="1" width="1" height="1" fill="#a4a4a4"/></pattern><linearGradient id="pg" x1="0" y1="0" x2="1" y2="1"><stop offset=".45" stop-color="#fff"/><stop offset="1" stop-color="#b8c8f0"/></linearGradient></defs><path d="M0.500 0.500h8l3 3v11h-11z" fill="url(#pg)" stroke="#a8b4cc"/><path d="M11.500 3.500v11h-11" fill="none" stroke="#3c5580" stroke-width="1.200"/><path d="M8.500 0.500v3h3" fill="#f4f6fd" stroke="#4a628c" stroke-width=".8"/><polygon points="1.500,2 1.500,13 8,7.500" fill="url(#dp)"/></svg></div>
<div class="etab" style="left:670.7px;font-weight:bold;transform-origin:0 50%;transform:scaleX(0.9861);">main.c</div>
<div class="abs" style="left:725px;top:4px;height:16px"><svg width="13" height="16" viewBox="0 0 13 16"><path d="M0.500 0.500h8l3 3v11h-11z" fill="url(#pg)" stroke="#a8b4cc"/><path d="M11.500 3.500v11h-11" fill="none" stroke="#3c5580" stroke-width="1.200"/><path d="M8.500 0.500v3h3" fill="#f4f6fd" stroke="#4a628c" stroke-width=".8"/></svg></div>
<div class="etab" style="left:746.9px;transform-origin:0 50%;transform:scaleX(1.0228);">rc522_config.h</div>
<div class="abs" style="left:842px;top:4px;height:16px"><svg width="13" height="16" viewBox="0 0 13 16"><path d="M0.500 0.500h8l3 3v11h-11z" fill="url(#pg)" stroke="#a8b4cc"/><path d="M11.500 3.500v11h-11" fill="none" stroke="#3c5580" stroke-width="1.200"/><path d="M8.500 0.500v3h3" fill="#f4f6fd" stroke="#4a628c" stroke-width=".8"/></svg></div>
<div class="etab" style="left:864.1px;transform-origin:0 50%;transform:scaleX(1.0306);">bsp_led.h</div>
<div class="abs" style="left:934.4px;top:4px;height:16px"><svg width="13" height="16" viewBox="0 0 13 16"><path d="M0.500 0.500h8l3 3v11h-11z" fill="url(#pg)" stroke="#a8b4cc"/><path d="M11.500 3.500v11h-11" fill="none" stroke="#3c5580" stroke-width="1.200"/><path d="M8.500 0.500v3h3" fill="#f4f6fd" stroke="#4a628c" stroke-width=".8"/></svg></div>
<div class="etab" style="left:956.0px;transform-origin:0 50%;transform:scaleX(1.0851);">string.h</div>
<div class="abs" style="left:671px;top:20px;width:38px;height:2px;background:#000"></div>
<svg class="abs" style="left:1327px;top:5px" width="34" height="12" viewBox="0 0 34 12"><path d="M1.900 4h9.300l-4.650 5z" fill="#000"/><path d="M22.500 2.600l7 6.300M29.500 2.600l-7 6.300" stroke="#000" stroke-width="1.700"/></svg>
<div class="abs" style="left:405px;top:23px;width:960px;height:488px;background:#bea8e1"></div>
<div class="abs" style="left:405px;top:511px;width:960px;height:1px;background:#d0d0d0"></div>
<div class="abs" style="left:407px;top:25px;width:956px;height:484px;background:#fff;border-left:2px solid #6a6a6a;border-top:1px solid #6a6a6a;border-left-color:#8c8c8c"></div>
<div class="abs" style="left:408px;top:25px;width:1px;height:484px;background:#666"></div>
<div class="abs" style="left:407px;top:24px;width:956px;height:1px;background:#9c9c9c"></div>
<div class="abs" style="left:409px;top:26px;width:62px;height:464px;background:#e8e8e8"></div>
<div class="abs" style="left:471px;top:26px;width:14px;height:464px;background:#f5f5f5;background-image:linear-gradient(45deg,#ececec 25%,transparent 25%,transparent 75%,#ececec 75%),linear-gradient(45deg,#ececec 25%,#fff 25%,#fff 75%,#ececec 75%);background-size:2px 2px;background-position:0 0,1px 1px"></div>
<div class="abs" style="left:478px;top:26px;width:1px;height:464px;background:#808080"></div>
<div class="abs" style="left:486px;top:378px;width:344px;height:16px;background:#8ac6f6"></div>
<div class="abs" style="left:830px;top:378px;width:513px;height:16px;background:#e0fce0"></div>
<div class="abs" style="left:486px;top:394px;width:160px;height:16px;background:#8ac6f6"></div>
<div class="abs" style="left:409px;top:26px;width:935px;height:464px;overflow:hidden">
<div style="position:absolute;left:-409px;top:-26px">
<div class="ln" style="top:26.5px">32</div>
<span class="code " style="left:502px;top:26.5px">{</span>
<div class="ln" style="top:42.5px">33</div>
<span class="code c ns" style="left:518px;top:42.5px">/*</span>
<span class="cz c" style="left:534px;top:43px">寻卡</span>
<span class="code c ns" style="left:566px;top:42.5px">*/</span>
<div class="ln" style="top:58.5px">34</div>
<span class="code k" style="left:518px;top:58.5px">if</span>
<span class="code " style="left:542px;top:58.5px">( ( ucStatusReturn = PcdRequest ( PICC_REQALL, ucArray_ID ) ) != MI_OK )</span>
<div class="ln" style="top:74.5px">35</div>
<span class="code c ns" style="left:534px;top:74.5px">/*</span>
<span class="cz c" style="left:550px;top:75px">若失败再次寻卡</span>
<span class="code c ns" style="left:662px;top:74.5px">*/</span>
<div class="ln" style="top:90.5px">36</div>
<span class="code " style="left:534px;top:90.5px">ucStatusReturn = PcdRequest ( PICC_REQALL, ucArray_ID );</span>
<div class="ln" style="top:106.5px">37</div>
<div class="ln" style="top:122.5px">38</div>
<span class="code k" style="left:518px;top:122.5px">if</span>
<span class="code " style="left:542px;top:122.5px">( ucStatusReturn == MI_OK  )</span>
<div class="ln" style="top:138.5px">39</div>
<span class="code " style="left:518px;top:138.5px">{</span>
<div class="ln" style="top:154.5px">40</div>
<span class="code c ns" style="left:534px;top:154.5px">/*</span>
<span class="cz c" style="left:550px;top:155px">防冲撞（当有多张卡进入读写器操作范围时，防冲突机制会从其中选择一张进行操作）</span>
<span class="code c ns" style="left:1158px;top:154.5px">*/</span>
<div class="ln" style="top:170.5px">41</div>
<span class="code k" style="left:534px;top:170.5px">if</span>
<span class="code " style="left:558px;top:170.5px">( PcdAnticoll ( ucArray_ID ) == MI_OK )</span>
<div class="ln" style="top:186.5px">42</div>
<span class="code " style="left:534px;top:186.5px">{</span>
<div class="ln" style="top:202.5px">43</div>
<span class="code c ns" style="left:550px;top:202.5px">/*</span>
<span class="cz c" style="left:566px;top:203px">卡号显示在</span>
<span class="cm c" style="left:646px;top:202.5px"><span class="sm">L</span><span class="sm">C</span><span class="sm">D</span></span>
<span class="cz c" style="left:670px;top:203px">上</span>
<span class="code c ns" style="left:686px;top:202.5px">*/</span>
<div class="ln" style="top:218.5px">44</div>
<span class="code " style="left:550px;top:218.5px">sprintf ( cStr, </span>
<span class="code s" style="left:678px;top:218.5px">"The Card ID is: %02X%02X%02X%02X"</span>
<span class="code " style="left:950px;top:218.5px">,</span>
<div class="ln" style="top:234.5px">45</div>
<span class="code " style="left:630px;top:234.5px">ucArray_ID [ </span>
<span class="code n" style="left:734px;top:234.5px">0</span>
<span class="code " style="left:750px;top:234.5px">],</span>
<div class="ln" style="top:250.5px">46</div>
<span class="code " style="left:630px;top:250.5px">ucArray_ID [ </span>
<span class="code n" style="left:734px;top:250.5px">1</span>
<span class="code " style="left:750px;top:250.5px">],</span>
<div class="ln" style="top:266.5px">47</div>
<span class="code " style="left:630px;top:266.5px">ucArray_ID [ </span>
<span class="code n" style="left:734px;top:266.5px">2</span>
<span class="code " style="left:750px;top:266.5px">],</span>
<div class="ln" style="top:282.5px">48</div>
<span class="code " style="left:630px;top:282.5px">ucArray_ID [ </span>
<span class="code n" style="left:734px;top:282.5px">3</span>
<span class="code " style="left:750px;top:282.5px">] );</span>
<div class="ln" style="top:298.5px">49</div>
<span class="code c ns" style="left:550px;top:298.5px">/*</span>
<div class="ln" style="top:314.5px">50</div>
<span class="code c" style="left:550px;top:314.5px">LED_G(ON);</span>
<div class="ln" style="top:330.5px">51</div>
<span class="code c ns" style="left:550px;top:330.5px">*/</span>
<div class="ln" style="top:346.5px">52</div>
<div class="ln" style="top:362.5px">53</div>
<div class="ln" style="top:378.5px">54</div>
<span class="code k" style="left:550px;top:378.5px">if</span>
<span class="code " style="left:574px;top:378.5px">( strcmp(ucArray_ID,ID)==0 )</span>
<div class="ln" style="top:394.5px">55</div>
<span class="code " style="left:566px;top:394.5px">LED_G(ON);</span>
<div class="ln" style="top:410.5px">56</div>
<div class="ln" style="top:426.5px">57</div>
<div class="ln" style="top:442.5px">58</div>
<span class="code c ns" style="left:550px;top:442.5px">/*</span>
<span class="cz c" style="left:566px;top:443px">卡号显示在</span>
<span class="cm c" style="left:646px;top:442.5px"><span class="sm">P</span><span class="sm">C</span></span>
<span class="cz c" style="left:662px;top:443px">端助手上</span>
<span class="code c ns" style="left:726px;top:442.5px">*/</span>
<div class="ln" style="top:458.5px">59</div>
<span class="code " style="left:550px;top:458.5px">printf ( </span>
<span class="code s" style="left:622px;top:458.5px">"%s\r\n"</span>
<span class="code " style="left:686px;top:458.5px">,cStr );</span>
<div class="ln" style="top:474.5px">60</div>
<div class="fold" style="top:29px"></div>
<div class="fold" style="top:141px"></div>
<div class="fold" style="top:189px"></div>
<div class="fold" style="top:301px"></div>
<div class="abs" style="left:478px;top:370px;width:5px;height:1px;background:#808080"></div>
</div></div>
<div class="abs" style="left:1345px;top:26px;width:17px;height:482px;background:#f0f0f0"></div>
<div class="abs" style="left:1345px;top:152px;width:15px;height:102px;background:#cdcdcd"></div>
<svg class="abs" style="left:1347.8px;top:30px" width="10" height="10" viewBox="0 0 10 10"><path d="M1.700 6.800L5 3.300L8.300 6.800" fill="none" stroke="#555" stroke-width="2.1"/></svg>
<svg class="abs" style="left:1347.8px;top:476.7px" width="10" height="10" viewBox="0 0 10 10"><path d="M1.700 3.200L5 6.700L8.300 3.200" fill="none" stroke="#555" stroke-width="2.1"/></svg>
<div class="abs" style="left:409px;top:490px;width:936px;height:1px;background:#fff"></div>
<div class="abs" style="left:409px;top:491px;width:936px;height:17px;background:#f0f0f0"></div>
<div class="abs" style="left:426px;top:491px;width:386px;height:15px;background:#cdcdcd"></div>
<svg class="abs" style="left:412px;top:493.5px" width="10" height="10" viewBox="0 0 10 10"><path d="M6.800 1.700L3.300 5L6.800 8.300" fill="none" stroke="#555" stroke-width="2.1"/></svg>
<svg class="abs" style="left:1330.8px;top:493.5px" width="10" height="10" viewBox="0 0 10 10"><path d="M3.200 1.700L6.700 5L3.200 8.300" fill="none" stroke="#555" stroke-width="2.1"/></svg>
<div class="abs" style="left:0;top:512px;width:1365px;height:4px;background:#fff"></div>
<div class="ttl" style="left:0;top:516px;width:1365px;height:18px;line-height:20px"><span style="display:inline-block;transform-origin:0 50%;transform:scaleX(1.1173);">Build Output</span></div>
<div class="abs" style="left:1334px;top:520.900px"><svg width="8" height="9" viewBox="0 0 8 9" style="display:block"><rect x="1.600" y="0.500" width="4.300" height="5.200" fill="#e8eef4" stroke="#000" stroke-width="1.100"/><rect x="3.600" y="0.500" width="2.300" height="5.200" fill="#000"/><path d="M0 6.200h7.400" stroke="#000" stroke-width="1.300"/><path d="M3.700 6.500v2.300" stroke="#000" stroke-width="1.200"/></svg></div>
<div class="closeb" style="left:1350px;top:520px"><svg width="12" height="12" viewBox="0 0 12 12" style="display:block"><path d="M3.500 3.400L7.700 7.600M7.700 3.400L3.500 7.600" stroke="#fff" stroke-width="1.900"/></svg></div>
<div class="abs" style="left:0;top:534px;width:1365px;height:48px;background:#fff"></div>
<div class="abs" style="left:1px;top:536px;width:1362px;height:45px;border:1px solid #b8b8b8;border-left:2px solid #b0b0b0;border-right:1px solid #e3e3e3;border-bottom:1px solid #e3e3e3;background:#f4f4f4"></div>
<div class="abs" style="left:3px;top:538px;width:1358px;height:41.500px;border-left:2px solid #666;background:#f0f0f0"></div>
<div class="abs" style="left:3px;top:538px;width:1358px;height:1px;background:#ececec"></div>
<div class="abs" style="left:3px;top:539px;width:1358px;height:1px;background:#9a9a9a"></div>
<div class="abs" style="left:3px;top:540px;width:1358px;height:1px;background:#666"></div>
<div class="abs" style="left:5px;top:541px;width:1339px;height:21px;background:#fff"></div>
<div class="code" style="left:7px;top:541.800px">compiling main.c...</div>
<div class="abs" style="left:5px;top:557px;width:1339px;height:5px;background:#0078d7;overflow:hidden"><div style="position:absolute;left:2px;top:1.500px;height:16px;line-height:16px;font-family:'Liberation Mono',monospace;font-size:13.333px;white-space:pre;color:#fff">..\..\User\main.c(54): warning:  #167-D: argument of type "u8 *" is incompatible with parameter of type "const char *"</div></div>
<svg class="abs" style="left:1347.5px;top:543px" width="10" height="10" viewBox="0 0 10 10"><path d="M1.700 6.800L5 3.300L8.300 6.800" fill="none" stroke="#555" stroke-width="2.1"/></svg>
<svg class="abs" style="left:1347.5px;top:554px" width="10" height="10" viewBox="0 0 10 10"><path d="M1.700 3.200L5 6.700L8.300 3.200" fill="none" stroke="#555" stroke-width="2.1"/></svg>
<svg class="abs" style="left:8px;top:565.5px" width="10" height="10" viewBox="0 0 10 10"><path d="M6.800 1.700L3.300 5L6.800 8.300" fill="none" stroke="#bcbcbc" stroke-width="2.1"/></svg>
<svg class="abs" style="left:1331px;top:565.5px" width="10" height="10" viewBox="0 0 10 10"><path d="M3.200 1.700L6.700 5L3.200 8.300" fill="none" stroke="#bcbcbc" stroke-width="2.1"/></svg>
<div class="abs" style="left:0;top:581px;width:1365px;height:25px;background:#f7f7f7"></div>
<div class="abs" style="left:0;top:582px;width:1365px;height:1px;background:#000"></div>
<div class="abs" style="left:3px;top:581px;width:96px;height:24px;background:#f0f0f0;border:1px solid #000;border-top:none;border-left:none"></div>
<svg class="abs" style="left:7px;top:586px" width="14" height="13" viewBox="0 0 14 13"><rect x=".5" y=".5" width="13" height="12" fill="#fff" stroke="#4a66a8"/><rect x="1" y="1" width="12" height="3" fill="url(#tb)"/><path d="M2.500 6.500h3M6.500 6.500h2M9.500 6.500h2M2.500 8.500h4" stroke="#555" stroke-width="1"/></svg>
<div class="btab sel" style="left:23.600px;top:584px;transform-origin:0 50%;transform:scaleX(1.0822);">Build Output</div>
<svg class="abs" style="left:103px;top:584px" width="18" height="17" viewBox="0 0 18 17"><rect x=".5" y="4.500" width="15" height="11" fill="#fff" stroke="#4a66a8"/><rect x="1" y="5" width="14" height="2.500" fill="url(#tb)"/><path d="M8 7.500v8" stroke="#9ab0d8" stroke-width="1"/><path d="M2 10.500h4M2 12.500h4" stroke="#8090b0" stroke-width="1"/><path d="M0.500 15.500h15v-11" fill="none" stroke="#34508c" stroke-width="1.200"/><path d="M11 0.800l3 2.700-3 2.700-3-2.700z" fill="#5aa0f0" stroke="#3a70c0" stroke-width=".5"/><path d="M5 4.800l3.200 2.700-3.200 3-3.200-3z" fill="#f4c828" stroke="#c89a10" stroke-width=".5"/><path d="M12 6.800l3.300 2.900-3.300 3.100-3.300-3.100z" fill="#ee6ee8" stroke="#c050bc" stroke-width=".5"/></svg>
<div class="btab" style="left:121px;top:584px;transform-origin:0 50%;transform:scaleX(1.0193);">Browser</div>
<div class="abs" style="left:169px;top:586px;width:1px;height:15px;background:#b0b0b0"></div>
<div class="abs" style="left:0;top:606px;width:1365px;height:4px;background:#f0f0f0;border-top:1px solid #dcdcdc"></div>
<div class="abs" style="left:846px;top:607px;width:1px;height:3px;background:#d0d0d0"></div>
<div class="abs" style="left:998px;top:607px;width:1px;height:3px;background:#d0d0d0"></div>
<div class="abs" style="left:1123px;top:607px;width:1px;height:3px;background:#d0d0d0"></div>
<div class="abs" style="left:1216px;top:607px;width:1px;height:3px;background:#d0d0d0"></div>
<div class="abs" style="left:1242px;top:607px;width:1px;height:3px;background:#d0d0d0"></div>
<div class="abs" style="left:1273px;top:607px;width:1px;height:3px;background:#d0d0d0"></div>
<div class="abs" style="left:1305px;top:607px;width:1px;height:3px;background:#d0d0d0"></div>
<div class="abs" style="left:1333px;top:607px;width:1px;height:3px;background:#d0d0d0"></div>
</body></html>
